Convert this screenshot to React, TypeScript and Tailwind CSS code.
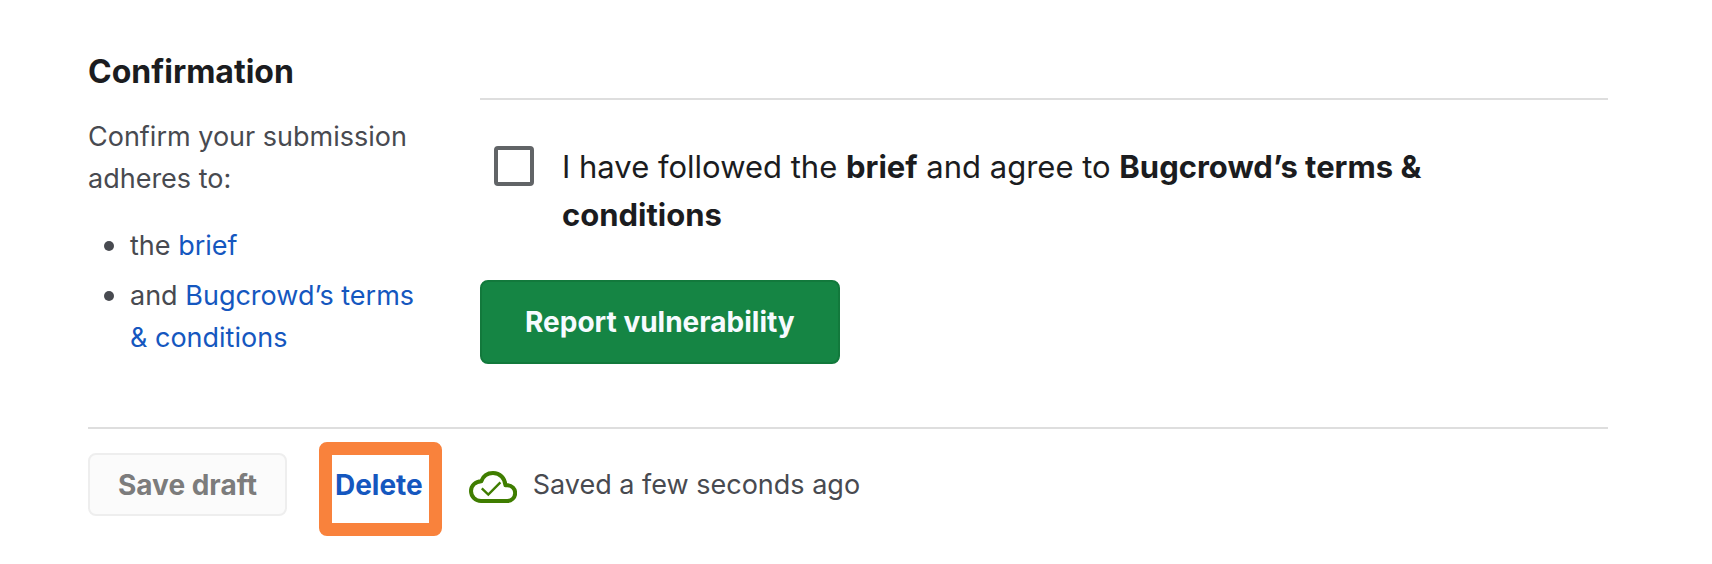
function CloudCheckIcon() {
  return (
    <svg viewBox="0 0 48 32" className="mt-1 h-8 w-12 shrink-0" fill="none" stroke="#3f7d00" aria-hidden="true">
      <path
        strokeWidth="4"
        strokeLinejoin="round"
        d="M12 30H38A7.9 7.9 0 0 0 38.5 14.2H36.4C36 7.2 31 2 24 2C18.300 2 14 5.500 12.300 10.200C6.500 10.400 2 14.600 2 20.100C2 25.600 6.500 30 12 30Z"
      />
      <path strokeWidth="2.400" d="M12.800 17.300L19.300 23.500L31.400 11.400" />
    </svg>
  );
}

export default function App() {
  return (
    <main className="pt-[52px] pr-[104px] pb-12 pl-[88px] font-['Inter',sans-serif] text-[27px] leading-[42px] text-[#484a50]">
      <form onSubmit={(event) => event.preventDefault()}>
        <div className="flex items-start gap-12 pb-[63px]">
          <section className="w-[344px] shrink-0">
            <h2 className="text-[32px] leading-10 font-bold text-[#1b1c20]">Confirmation</h2>
            <p className="mt-6">Confirm your submission adheres to:</p>
            <ul className="mt-[25px] flex flex-col gap-2">
              <li className="flex items-start">
                <span className="mt-4 mr-4 ml-4 size-[10px] shrink-0 rounded-full bg-[#484a50]" />
                <span>
                  the <a href="#brief" className="text-[#1557bf]">brief</a>
                </span>
              </li>
              <li className="flex items-start">
                <span className="mt-4 mr-4 ml-4 size-[10px] shrink-0 rounded-full bg-[#484a50]" />
                <span>
                  and <a href="#terms" className="text-[#1557bf]">Bugcrowd’s terms & conditions</a>
                </span>
              </li>
            </ul>
          </section>
          <section className="mt-[46px] min-w-0 flex-1 border-t-2 border-[#dedede] pt-[43px]">
            <label className="flex items-start gap-7 pr-32 pl-[14px] text-[31px] leading-[48px] text-[#1b1c20]">
              <input
                type="checkbox"
                className="mt-[3px] size-10 shrink-0 appearance-none rounded border-4 border-[#616467] bg-white checked:bg-[#616467]"
              />
              <span>
                I have followed the <strong className="font-bold">brief</strong> and agree to{" "}
                <strong className="font-bold">Bugcrowd’s terms & conditions</strong>
              </span>
            </label>
            <button
              type="submit"
              className="mt-[41px] flex h-[84px] items-center rounded-lg border-2 border-[#12793c] bg-[#158544] px-[43px] text-[28px] font-bold text-[#f7fbff]"
            >
              Report vulnerability
            </button>
          </section>
        </div>
        <footer className="flex items-center border-t-2 border-[#dedede] pt-6">
          <button
            type="button"
            disabled
            className="flex h-[63px] items-center rounded-lg border-2 border-[#eeeeee] bg-[#fbfbfb] px-7 text-[28px] font-bold text-[#7c7c7c]"
          >
            Save draft
          </button>
          <div className="relative ml-12">
            <button type="button" className="block text-[28px] font-bold text-[#1557bf]">
              Delete
            </button>
            <span className="pointer-events-none absolute -top-[22px] -right-[19px] -bottom-[30px] -left-4 rounded-lg border-[13px] border-[#f9823c]" />
          </div>
          <div className="ml-[46px] flex items-center gap-4">
            <CloudCheckIcon />
            <span>Saved a few seconds ago</span>
          </div>
        </footer>
      </form>
    </main>
  );
}
